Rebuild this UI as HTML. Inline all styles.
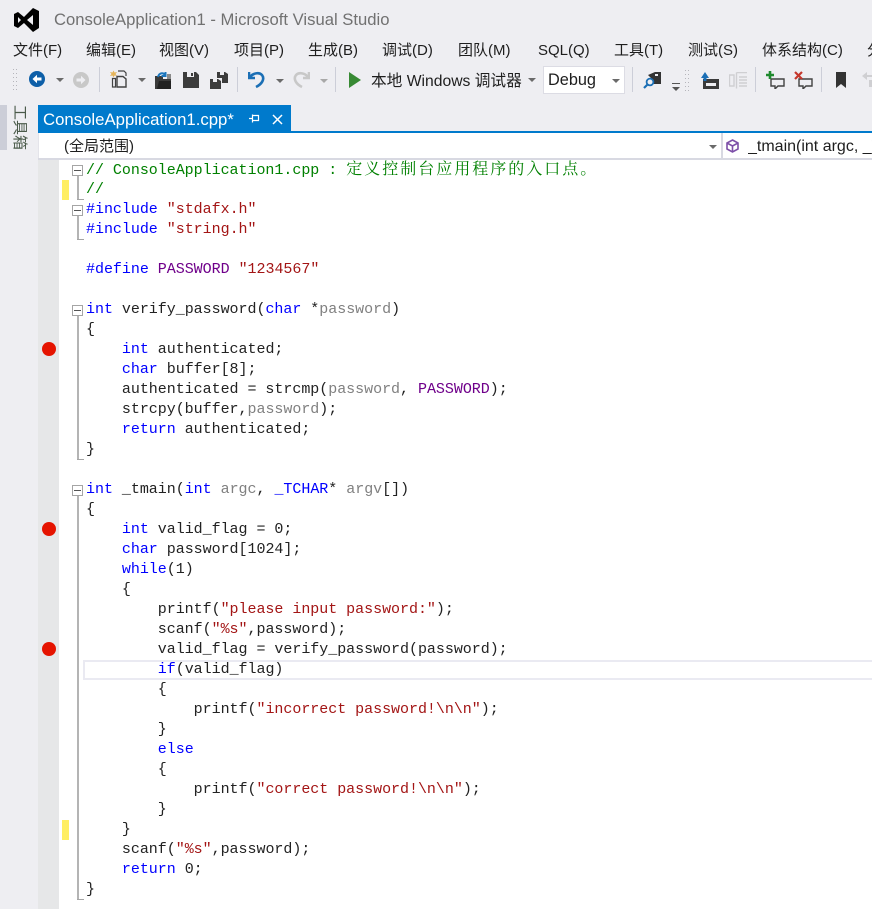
<!DOCTYPE html>
<html lang="zh"><head><meta charset="utf-8"><style>
html,body{margin:0;padding:0}
body{width:872px;height:909px;overflow:hidden;background:#eeeef2;position:relative;font-family:"Liberation Sans","Noto Sans CJK SC",sans-serif;color:#1e1e1e}
.a{position:absolute;white-space:pre}
.m{font-size:15px;top:41px;line-height:20px}
.l{position:absolute;left:86px;margin-top:1px;height:20px;line-height:20px;font-family:"Liberation Mono","Noto Serif CJK SC",monospace;font-size:15px;letter-spacing:-.03px;white-space:pre;color:#222}
.b{color:#0000ff}.s{color:#a31515}.c{color:#008000}.p{color:#6f008a}.g{color:#808080}
.l i{font-style:normal;font-family:"Noto Serif CJK SC",serif;font-size:16px;letter-spacing:2px}
.tri{position:absolute;width:0;height:0;border-left:4px solid transparent;border-right:4px solid transparent;border-top:4px solid #6a6a6a}
.sep{position:absolute;top:67px;width:1px;height:25px;background:#ccced8}
.bp{position:absolute;left:42px;width:14px;height:14px;border-radius:50%;background:#e51400}
.ym{position:absolute;left:62px;width:7px;height:20px;background:#ffee62}
.fb{position:absolute;left:72px;width:9px;height:9px;border:1px solid #a5a5a5;background:#fff}
.fb:after{content:"";position:absolute;left:1px;top:4px;width:7px;height:1px;background:#555}
.fl{position:absolute;left:77px;width:2px;background:#b4b4b4}
.fe{position:absolute;left:77px;width:7px;height:1px;background:#a5a5a5}
svg{position:absolute;overflow:hidden}
</style></head><body>

<svg style="left:14px;top:7px" width="26" height="26" viewBox="0 0 26 26"><path d="M0 7L4 5L10 10L19 1L25 4V21L19 25L10 16L4 21L0 19ZM4 10V16L7 13ZM19 8L13 13L19 18Z" fill="#000" fill-rule="evenodd"/></svg>
<div class="a" style="left:54px;top:9px;font-size:16.65px;line-height:22px;color:#717171">ConsoleApplication1 - Microsoft Visual Studio</div>

<div class="a m" style="left:13px">文件(F)</div>
<div class="a m" style="left:86px">编辑(E)</div>
<div class="a m" style="left:159px">视图(V)</div>
<div class="a m" style="left:234px">项目(P)</div>
<div class="a m" style="left:308px">生成(B)</div>
<div class="a m" style="left:382px">调试(D)</div>
<div class="a m" style="left:458px">团队(M)</div>
<div class="a m" style="left:538px">SQL(Q)</div>
<div class="a m" style="left:614px">工具(T)</div>
<div class="a m" style="left:688px">测试(S)</div>
<div class="a m" style="left:762px">体系结构(C)</div>
<div class="a m" style="left:867px;width:5px;overflow:hidden">分析</div>

<svg style="left:13px;top:68px" width="6" height="24"><g fill="#b5b5bb"><rect x="0" y="1" width="1" height="1"/><rect x="3" y="1" width="1" height="1"/><rect x="0" y="5" width="1" height="1"/><rect x="3" y="5" width="1" height="1"/><rect x="0" y="9" width="1" height="1"/><rect x="3" y="9" width="1" height="1"/><rect x="0" y="13" width="1" height="1"/><rect x="3" y="13" width="1" height="1"/><rect x="0" y="17" width="1" height="1"/><rect x="3" y="17" width="1" height="1"/><rect x="0" y="21" width="1" height="1"/><rect x="3" y="21" width="1" height="1"/></g></svg>

<svg style="left:29px;top:71px" width="16" height="16"><circle cx="8" cy="8" r="8" fill="#0e5fa8"/><path d="M3.5 8L8 3.8V6.5H12.5V9.5H8V12.2Z" fill="#fff"/></svg>
<div class="tri" style="left:56px;top:78px"></div>
<svg style="left:73px;top:72px" width="16" height="16"><circle cx="8" cy="8" r="8" fill="#c8c8c8"/><path d="M12.5 8L8 3.8V6.5H3.5V9.5H8V12.2Z" fill="#eeeef2"/></svg>
<div class="sep" style="left:99px"></div>

<svg style="left:110px;top:70px" width="18" height="18"><path d="M3.5 0.5L4.5 2.5L7 2L5.5 4L7 6L4.5 5.5L3.5 7.5L2.5 5.5L0 6L1.5 4L0 2L2.5 2.5Z" fill="#e5b45a"/><path d="M2.5 8.5H5.5V17H2.5Z M8 1H14L16 3V6" fill="none" stroke="#424242" stroke-width="1.2"/><path d="M7 6.5H13L16 9V17H7Z" fill="#eeeef2" stroke="#424242" stroke-width="1.4"/></svg>
<div class="tri" style="left:138px;top:78px"></div>
<svg style="left:154px;top:71px" width="18" height="18"><path d="M1 5H9V8H17V18H1Z" fill="#3a3a3a"/><path d="M13 3H17V8H13Z" fill="#8a8a8a"/><path d="M3 18L5 10H17V18Z" fill="#222"/><path d="M4 6C5 2 9 1 11 4M11.5 1V5H7.5" fill="none" stroke="#1b75bc" stroke-width="2"/></svg>
<svg style="left:183px;top:72px" width="16" height="16"><path d="M0 0H13L16 3V16H0Z" fill="#3c3c3c"/><rect x="4" y="0" width="7" height="5" fill="#eeeef2"/><rect x="8" y="1" width="2" height="3" fill="#3c3c3c"/></svg>
<svg style="left:210px;top:71px" width="18" height="18"><path d="M7 1H15L18 3V12H12V7H7Z" fill="#3c3c3c"/><rect x="10" y="1" width="4" height="3" fill="#eeeef2"/><path d="M0 8H8L11 10V18H0Z" fill="#3c3c3c"/><rect x="3" y="8" width="4" height="3" fill="#eeeef2"/></svg>
<div class="sep" style="left:237px"></div>

<svg style="left:248px;top:71px" width="18" height="18"><path d="M1 1V7H7M2 6C5 2 11 1 14 4C17 8 14 13 8 16" fill="none" stroke="#1b6fb5" stroke-width="2.6"/></svg>
<div class="tri" style="left:276px;top:79px"></div>
<svg style="left:292px;top:71px" width="18" height="18"><path d="M17 1V7H11M16 6C13 2 7 1 4 4C1 8 4 13 10 16" fill="none" stroke="#c8c8c8" stroke-width="2.6"/></svg>
<div class="tri" style="left:320px;top:79px;border-top-color:#a8a8a8"></div>
<div class="sep" style="left:335px"></div>

<svg style="left:349px;top:72px" width="12" height="16"><path d="M0 0L12 8L0 16Z" fill="#388a34"/></svg>
<div class="a" style="left:371px;top:71px;font-size:15.7px;line-height:21px">本地 Windows 调试器</div>
<div class="tri" style="left:528px;top:78px"></div>
<div class="a" style="left:543px;top:66px;width:82px;height:28px;background:#fff;border:1px solid #dcdce4;box-sizing:border-box"></div>
<div class="a" style="left:548px;top:70px;font-size:16.3px;line-height:21px">Debug</div>
<div class="tri" style="left:612px;top:79px"></div>
<div class="sep" style="left:632px"></div>

<svg style="left:643px;top:71px" width="18" height="18"><path d="M5 4L12 1H18V13H8V7Z" fill="#333"/><rect x="12" y="3" width="3" height="2" fill="#eeeef2"/><circle cx="7" cy="11" r="3.4" fill="#eeeef2" stroke="#1b6fb5" stroke-width="1.8"/><path d="M4.5 13.5L1 17" stroke="#1b6fb5" stroke-width="2.2"/></svg>
<div class="a" style="left:672px;top:83px;width:8px;height:1px;background:#555"></div>
<div class="tri" style="left:672px;top:87px;border-top-color:#555"></div>
<svg style="left:685px;top:69px" width="6" height="23"><g fill="#b5b5bb"><rect x="0" y="1" width="1" height="1"/><rect x="3" y="1" width="1" height="1"/><rect x="0" y="5" width="1" height="1"/><rect x="3" y="5" width="1" height="1"/><rect x="0" y="9" width="1" height="1"/><rect x="3" y="9" width="1" height="1"/><rect x="0" y="13" width="1" height="1"/><rect x="3" y="13" width="1" height="1"/><rect x="0" y="17" width="1" height="1"/><rect x="3" y="17" width="1" height="1"/><rect x="0" y="21" width="1" height="1"/><rect x="3" y="21" width="1" height="1"/></g></svg>
<svg style="left:701px;top:72px" width="18" height="17"><path d="M2 7H18V17H2Z" fill="#3a3a3a"/><rect x="5" y="11" width="10" height="3" fill="#eeeef2"/><path d="M4 0L8 6H5.5V9H2.5V6H0Z" fill="#1b6fb5"/></svg>
<svg style="left:729px;top:72px" width="18" height="17"><g fill="none" stroke="#cfcfd2" stroke-width="1.4"><path d="M0.5 3H5V14H0.5Z"/><path d="M7.5 0.5H18M7.5 0.5V16.5"/><path d="M10 5H18M10 8H18M10 11H18M10 14H18"/></g></svg>
<div class="sep" style="left:755px"></div>

<svg style="left:766px;top:71px" width="19" height="18"><path d="M5 8H18V15H12L9 18V15H5Z" fill="#eeeef2" stroke="#424242" stroke-width="1.4"/><path d="M4 0V8M0 4H8" stroke="#1f8a2e" stroke-width="2.6"/></svg>
<svg style="left:794px;top:71px" width="19" height="18"><path d="M5 8H18V15H12L9 18V15H5Z" fill="#eeeef2" stroke="#424242" stroke-width="1.4"/><path d="M1 1L8 8M8 1L1 8" stroke="#c5372c" stroke-width="2.2"/></svg>
<div class="sep" style="left:821px"></div>

<svg style="left:836px;top:72px" width="10" height="16"><path d="M0 0H10V16L5 12L0 16Z" fill="#333"/></svg>
<svg style="left:862px;top:72px" width="10" height="16"><path d="M5 0L0 4L5 8V5H10V3H5ZM7 8H10V15H7Z" fill="#cfcfd2"/></svg>

<div class="a" style="left:0;top:105px;width:7px;height:45px;background:#ccced8"></div>
<div class="a" style="left:11px;top:105px;height:46px;width:16px;font-size:15px;line-height:16px;color:#4a5a4a;writing-mode:vertical-rl;text-orientation:sideways">工具箱</div>

<div class="a" style="left:38px;top:105px;width:253px;height:26px;background:#007acc"></div>
<div class="a" style="left:38px;top:131px;width:834px;height:2px;background:#007acc"></div>
<div class="a" style="left:43px;top:109px;font-size:16.75px;line-height:22px;color:#fff">ConsoleApplication1.cpp*</div>
<svg style="left:248px;top:113px" width="12" height="12"><path d="M1 5.5H4.5M4.5 1.5V9.5M4.5 2.5H10.5V7.5H4.5" fill="none" stroke="#fff" stroke-width="1.2"/></svg>
<svg style="left:272px;top:114px" width="11" height="11"><path d="M1 1L10 10M10 1L1 10" stroke="#fff" stroke-width="1.5"/></svg>

<div class="a" style="left:38px;top:133px;width:834px;height:25px;background:#fff"></div>
<div class="a" style="left:38px;top:158px;width:834px;height:2px;background:#d8d9e2"></div>
<div class="a" style="left:38px;top:133px;width:1px;height:25px;background:#e4e4ea"></div>
<div class="a" style="left:64px;top:137px;font-size:15px;line-height:20px">(全局范围)</div>
<div class="tri" style="left:709px;top:145px"></div>
<div class="a" style="left:721px;top:133px;width:2px;height:26px;background:#d8d9e2"></div>
<svg style="left:726px;top:139px" width="13" height="14"><path d="M6.5 1L12 4V10L6.5 13L1 10V4ZM1 4L6.5 7L12 4M6.5 7V13" fill="none" stroke="#7d4fa8" stroke-width="1.6"/></svg>
<div class="a" style="left:748px;top:137px;width:124px;overflow:hidden;font-size:16px;line-height:20px">_tmain(int argc, _TCHAR* argv[])</div>

<div class="a" style="left:38px;top:160px;width:21px;height:749px;background:#e6e7e8"></div>
<div class="a" style="left:59px;top:160px;width:813px;height:749px;background:#fff"></div>

<div class="ym" style="top:180px"></div>
<div class="ym" style="top:820px"></div>
<div class="bp" style="top:342px"></div>
<div class="bp" style="top:522px"></div>
<div class="bp" style="top:642px"></div>

<div class="fl" style="top:176px;height:23px"></div><div class="fe" style="top:199px"></div>
<div class="fl" style="top:216px;height:23px"></div><div class="fe" style="top:239px"></div>
<div class="fl" style="top:316px;height:143px"></div><div class="fe" style="top:459px"></div>
<div class="fl" style="top:496px;height:403px"></div><div class="fe" style="top:899px"></div>
<div class="fb" style="top:165px"></div>
<div class="fb" style="top:205px"></div>
<div class="fb" style="top:305px"></div>
<div class="fb" style="top:485px"></div>

<div class="a" style="left:83px;top:660px;width:789px;height:20px;border:2px solid #eaeaf2;border-right:0;box-sizing:border-box"></div>

<div class="l c" style="top:159px;margin-top:-1px">// ConsoleApplication1.cpp : <i>定义控制台应用程序的入口点。</i></div>
<div class="l c" style="top:179px">//</div>
<div class="l" style="top:199px"><span class="b">#include</span> <span class="s">"stdafx.h"</span></div>
<div class="l" style="top:219px"><span class="b">#include</span> <span class="s">"string.h"</span></div>
<div class="l" style="top:259px"><span class="b">#define</span> <span class="p">PASSWORD</span> <span class="s">"1234567"</span></div>
<div class="l" style="top:299px"><span class="b">int</span> verify_password(<span class="b">char</span> *<span class="g">password</span>)</div>
<div class="l" style="top:319px">{</div>
<div class="l" style="top:339px">    <span class="b">int</span> authenticated;</div>
<div class="l" style="top:359px">    <span class="b">char</span> buffer[8];</div>
<div class="l" style="top:379px">    authenticated = strcmp(<span class="g">password</span>, <span class="p">PASSWORD</span>);</div>
<div class="l" style="top:399px">    strcpy(buffer,<span class="g">password</span>);</div>
<div class="l" style="top:419px">    <span class="b">return</span> authenticated;</div>
<div class="l" style="top:439px">}</div>
<div class="l" style="top:479px"><span class="b">int</span> _tmain(<span class="b">int</span> <span class="g">argc</span>, <span class="b">_TCHAR</span>* <span class="g">argv</span>[])</div>
<div class="l" style="top:499px">{</div>
<div class="l" style="top:519px">    <span class="b">int</span> valid_flag = 0;</div>
<div class="l" style="top:539px">    <span class="b">char</span> password[1024];</div>
<div class="l" style="top:559px">    <span class="b">while</span>(1)</div>
<div class="l" style="top:579px">    {</div>
<div class="l" style="top:599px">        printf(<span class="s">"please input password:"</span>);</div>
<div class="l" style="top:619px">        scanf(<span class="s">"%s"</span>,password);</div>
<div class="l" style="top:639px">        valid_flag = verify_password(password);</div>
<div class="l" style="top:659px">        <span class="b">if</span>(valid_flag)</div>
<div class="l" style="top:679px">        {</div>
<div class="l" style="top:699px">            printf(<span class="s">"incorrect password!\n\n"</span>);</div>
<div class="l" style="top:719px">        }</div>
<div class="l" style="top:739px">        <span class="b">else</span></div>
<div class="l" style="top:759px">        {</div>
<div class="l" style="top:779px">            printf(<span class="s">"correct password!\n\n"</span>);</div>
<div class="l" style="top:799px">        }</div>
<div class="l" style="top:819px">    }</div>
<div class="l" style="top:839px">    scanf(<span class="s">"%s"</span>,password);</div>
<div class="l" style="top:859px">    <span class="b">return</span> 0;</div>
<div class="l" style="top:879px">}</div>
</body></html>
